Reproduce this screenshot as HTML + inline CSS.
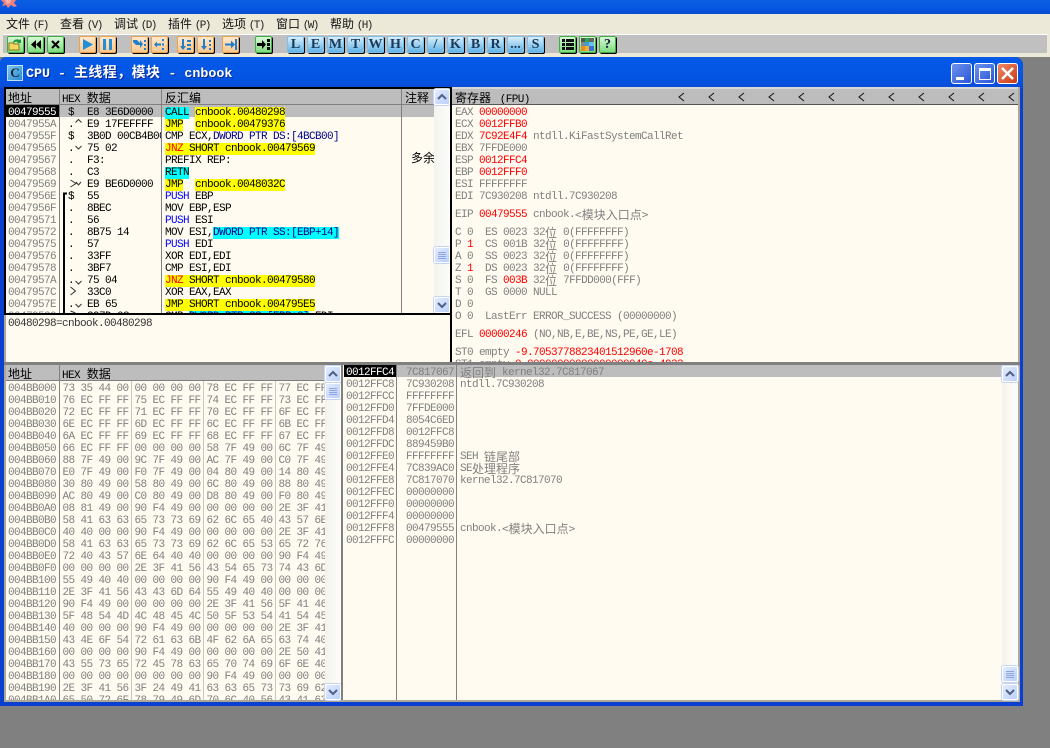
<!DOCTYPE html>
<html><head><meta charset="utf-8"><style>
*{box-sizing:border-box}
html,body{margin:0;padding:0;width:1050px;height:748px;overflow:hidden;background:#808080}
.a{position:absolute;overflow:hidden}
pre{margin:2px 0 0;position:absolute;font:11px/12px "Liberation Mono",monospace;letter-spacing:-.6px;white-space:pre;color:#808080}
.k{font:12px/12px "Noto Sans CJK SC",sans-serif;letter-spacing:0;vertical-align:top}
.r{color:#f00}.b{color:#000}.u{color:#00f}.n{color:#00008c}
.y{background:#ff0}.c{background:#0ff}
.h{position:absolute;background:#bdbdbd;color:#000;font:12px/18px "Noto Sans CJK SC",sans-serif;white-space:pre;overflow:hidden;border-bottom:1px solid #808080}
.h i{font:11px/18px "Liberation Mono",monospace;letter-spacing:-.6px;font-style:normal;margin-right:4px}
.m{position:absolute;top:16px;font:12px/16px "Noto Sans CJK SC",sans-serif;color:#111;white-space:pre}
.m i{font:11px/16px "Liberation Mono",monospace;font-style:normal;color:#222;letter-spacing:-1.6px}
.t{position:absolute;top:36px;width:17px;height:17px;border-radius:2px;box-shadow:1px 1px 0 #000;text-align:center;font:bold 14px/16px "Liberation Serif",serif;color:#17395c;overflow:hidden}
.t svg{position:absolute;left:0;top:0}
.o{background:linear-gradient(#ffe8cf,#fcc98f);border:1px solid #f0a24a}
.g{background:linear-gradient(#d8f8d8,#7fdc7f);border:1px solid #3fb03f}
.l{background:linear-gradient(#d9effb,#62b3e6);border:1px solid #7cbfe8}
.sb{position:absolute;width:16px;height:16px;background:linear-gradient(135deg,#e3ebfe,#bcd0f9);border:1px solid #fff;border-radius:2px;box-shadow:0 0 0 1px #c5d4f5}
.sb svg{position:absolute;left:0;top:0}
.track{position:absolute;background:linear-gradient(90deg,#f3f3ee,#fdfdfb)}
.wb{position:absolute;top:63px;width:21px;height:21px;border:1px solid #fff;border-radius:3px}
</style></head><body>

<!-- main app title -->
<div class="a" style="left:0;top:0;width:1050px;height:14px;background:linear-gradient(#0b5ee0,#0756e2 60%,#0a4cd0)"></div>
<svg class="a" style="left:0;top:0" width="18" height="12"><path d="M1 0h15l-2 3 3 3-3 1-3-2-3 3-2-3-4 1 2-3z" fill="#ee8080"/><path d="M5 0h6l-1 3-3 1z" fill="#f8b0a8"/></svg>

<!-- menu -->
<div class="a" style="left:0;top:14px;width:1050px;height:43px;background:#ece9d8"></div>
<div class="m" style="left:6px">文件 <i>(F)</i></div>
<div class="m" style="left:60px">查看 <i>(V)</i></div>
<div class="m" style="left:114px">调试 <i>(D)</i></div>
<div class="m" style="left:168px">插件 <i>(P)</i></div>
<div class="m" style="left:222px">选项 <i>(T)</i></div>
<div class="m" style="left:276px">窗口 <i>(W)</i></div>
<div class="m" style="left:330px">帮助 <i>(H)</i></div>

<!-- toolbar -->
<div class="a" style="left:3px;top:34px;width:1044px;height:19px;background:#c0c0c0;border-top:1px solid #fff"></div>
<div class="t g" style="left:7px"><svg width="15" height="15"><path d="M1 6h4l1 1h5v6H1z" fill="#f5d860" stroke="#8a7a20"/><path d="M5 5q2-4 7-2l1-1v4h-4l1-1q-3-1-4 1z" fill="#1f9a3a"/></svg></div>
<div class="t g" style="left:27px"><svg width="15" height="15"><path d="M8 3v9L3 7.500zM13 3v9L8 7.500z" fill="#000"/></svg></div>
<div class="t g" style="left:47px"><svg width="15" height="15"><path d="M4 4l7 7M11 4l-7 7" stroke="#000" stroke-width="2"/></svg></div>
<div class="t o" style="left:79px"><svg width="15" height="15"><path d="M3 2l10 5.500-10 5.500z" fill="#1f8fd8"/></svg></div>
<div class="t o" style="left:99px"><svg width="15" height="15"><path d="M3 2h3v11H3zM9 2h3v11H9z" fill="#1f8fd8"/></svg></div>
<div class="t o" style="left:131px"><svg width="15" height="15"><path d="M1 3h4l3 3V3l3 4-3 4V8H4L1 5z" fill="#1f7fc8"/><path d="M12 3h2v2h-2zM12 7h2v2h-2zM12 11h2v2h-2z" fill="#1f7fc8"/></svg></div>
<div class="t o" style="left:151px"><svg width="15" height="15"><path d="M2 7.500l3-3v2h4v2H5v2z" fill="#1f7fc8"/><path d="M10 2h2v2h-2zM10 6.500h2v2h-2zM10 11h2v2h-2z" fill="#1f7fc8"/></svg></div>
<div class="t o" style="left:177px"><svg width="15" height="15"><path d="M4 2h2v7h2l-3 4-3-4h2z" fill="#1f7fc8"/><path d="M9 3h4v2H9zM9 7h4v2H9zM9 11h4v2H9z" fill="#1f7fc8"/></svg></div>
<div class="t o" style="left:197px"><svg width="15" height="15"><path d="M5 2h2v7h2l-3 4-3-4h2z" fill="#1f7fc8"/><path d="M11 3h2v2h-2zM11 7h2v2h-2zM11 11h2v2h-2z" fill="#1f7fc8"/></svg></div>
<div class="t o" style="left:222px"><svg width="15" height="15"><path d="M2 6.500h6v-3l4 4-4 4v-3H2z" fill="#1f7fc8"/><path d="M12 2h2v11h-2z" fill="#1f7fc8"/></svg></div>
<div class="t g" style="left:255px"><svg width="15" height="15"><path d="M1 6h5V3l4 4.500L6 12V9H1z" fill="#000"/><path d="M11 2h3v3h-3zM11 6h3v3h-3zM11 10h3v3h-3z" fill="#000"/></svg></div>
<div class="t l" style="left:287px">L</div>
<div class="t l" style="left:307px">E</div>
<div class="t l" style="left:327px">M</div>
<div class="t l" style="left:347px">T</div>
<div class="t l" style="left:367px">W</div>
<div class="t l" style="left:387px">H</div>
<div class="t l" style="left:407px">C</div>
<div class="t l" style="left:427px">/</div>
<div class="t l" style="left:447px">K</div>
<div class="t l" style="left:467px">B</div>
<div class="t l" style="left:487px">R</div>
<div class="t l" style="left:507px">...</div>
<div class="t l" style="left:527px">S</div>
<div class="t g" style="left:559px"><svg width="15" height="15"><path d="M2 2h3v3H2zM6 2h8v3H6zM2 6h3v3H2zM6 6h8v3H6zM2 10h3v3H2zM6 10h8v3H6z" fill="#111"/></svg></div>
<div class="t g" style="left:579px"><svg width="15" height="15"><path d="M1 1h4v4H1z" fill="#555"/><path d="M5 1h4v4H5z" fill="#2aa84a"/><path d="M9 1h5v4H9z" fill="#666"/><path d="M1 5h4v4H1z" fill="#888"/><path d="M5 5h4v4H5z" fill="#39a0e0"/><path d="M9 5h5v4H9z" fill="#6bc0ee"/><path d="M1 9h4v5H1z" fill="#e88a20"/><path d="M5 9h4v5H5z" fill="#f2b030"/><path d="M9 9h5v5H9z" fill="#3f6fd0"/></svg></div>
<div class="t g" style="left:599px;color:#123">?</div>

<!-- CPU window frame -->
<div class="a" style="left:0;top:57px;width:1023px;height:649px;background:#0a3fd0;border-radius:6px 8px 0 0"></div>
<div class="a" style="left:0;top:57px;width:1023px;height:31px;background:linear-gradient(#0a5ae4,#0358e6 15%,#0454e4 70%,#0a4bd6);border-radius:6px 8px 0 0"></div>
<div class="a" style="left:7px;top:65px;width:16px;height:16px;background:linear-gradient(135deg,#7cc4f0,#2a8ad0);border:1px solid #bfe0f5;color:#123;font:bold 13px/14px 'Liberation Serif',serif;text-align:center">C</div>
<div class="a" style="left:26px;top:63px;width:300px;height:18px;color:#fff;font:bold 13.33px/18px 'Liberation Mono',monospace;white-space:pre;text-shadow:1px 1px 0 #0a2a90">CPU - <span style="font:bold 14px/18px 'Noto Sans CJK SC',sans-serif;letter-spacing:.4px">主线程，模块</span> - cnbook</div>
<div class="wb" style="left:951px;background:linear-gradient(135deg,#6d93ee,#2a55d8)"><div class="a" style="left:4px;top:13px;width:8px;height:3px;background:#fff"></div></div>
<div class="wb" style="left:974px;background:linear-gradient(135deg,#6d93ee,#2a55d8)"><div class="a" style="left:4px;top:4px;width:12px;height:12px;border:1px solid #fff;border-top-width:3px"></div></div>
<div class="wb" style="left:997px;background:linear-gradient(135deg,#ef8a66,#c93a14)"><svg class="a" style="left:0;top:0" width="19" height="19"><path d="M4 4l11 11M15 4L4 15" stroke="#fff" stroke-width="2.500"/></svg></div>

<!-- client area -->
<div class="a" style="left:4px;top:87px;width:1016px;height:615px;background:#aca899"></div>
<div class="a" style="left:6px;top:88px;width:1012px;height:612px;background:#fffbf0"></div>

<!-- disasm pane -->
<div class="a" style="left:4px;top:87px;width:448px;height:2px;background:#000"></div>
<div class="a" style="left:4px;top:87px;width:2px;height:228px;background:#000"></div>
<div class="a" style="left:6px;top:89px;width:428px;height:224px;overflow:hidden">
  <div class="h" style="left:0;top:0;width:428px;height:16px"></div>
  <div class="h" style="left:2px;top:0;width:50px;height:16px;background:none;border:0">地址</div>
  <div class="h" style="left:56px;top:0;width:90px;height:16px;background:none;border:0"><i>HEX</i> 数据</div>
  <div class="h" style="left:159px;top:0;width:90px;height:16px;background:none;border:0">反汇编</div>
  <div class="h" style="left:399px;top:0;width:30px;height:16px;background:none;border:0">注释</div>
  <div class="a" style="left:54px;top:16px;width:374px;height:12px;background:#bdbdbd"></div>
  <div class="a" style="left:0;top:16px;width:54px;height:12px;background:#000"></div>
  <pre style="left:2px;top:16px"><span style="color:#fff">00479555</span>
0047955A
0047955F
00479565
00479567
00479568
00479569
0047956E
0047956F
00479571
00479572
00479575
00479576
00479578
0047957A
0047957C
0047957E
00479580</pre>
  <pre class="b" style="left:62px;top:16px;color:#000">$
.
$
.
.
.

$
.
.
.
.
.
.
.

.
</pre>
  <div class="a" style="left:81px;top:16px;width:74px;height:216px"><pre style="left:0;top:0;color:#000">E8 3E6D0000
E9 17FEFFFF
3B0D 00CB4B00
75 02
F3:
C3
E9 BE6D0000
55
8BEC
56
8B75 14
57
33FF
3BF7
75 04
33C0
EB 65
397D 08</pre></div>
  <pre style="left:159px;top:16px;color:#000"><span class="c">CALL</span> <span class="y">cnbook.00480298</span>
<span class="y">JMP</span>  <span class="y">cnbook.00479376</span>
CMP ECX,<span class="n">DWORD PTR DS:[4BCB00]</span>
<span class="y"><span class="r">JNZ</span> SHORT cnbook.00479569</span>
PREFIX REP:
<span class="c">RETN</span>
<span class="y">JMP</span>  <span class="y">cnbook.0048032C</span>
<span class="u">PUSH</span> EBP
MOV EBP,ESP
<span class="u">PUSH</span> ESI
MOV ESI,<span class="c n">DWORD PTR SS:[EBP+14]</span>
<span class="u">PUSH</span> EDI
XOR EDI,EDI
CMP ESI,EDI
<span class="y"><span class="r">JNZ</span> SHORT cnbook.00479580</span>
XOR EAX,EAX
<span class="y">JMP SHORT cnbook.004795E5</span>
CMP <span class="c n">DWORD PTR SS:[EBP+8]</span>,EDI</pre>
  <div class="a" style="left:405px;top:62px;width:23px;height:14px;color:#000;font:12px/14px 'Noto Sans CJK SC',sans-serif;white-space:pre;overflow:hidden">多余</div>
  <div class="a" style="left:53px;top:0;width:1px;height:224px;background:#808080"></div>
  <div class="a" style="left:155px;top:0;width:1px;height:224px;background:#808080"></div>
  <div class="a" style="left:395px;top:0;width:1px;height:224px;background:#808080"></div>
  <svg class="a" style="left:0;top:0" width="428" height="224" fill="none" stroke="#333" stroke-width="1">
    <path d="M69.500 33.500l3-3 3 3"/>
    <path d="M69.500 57l3 3 3-3"/>
    <path d="M64.500 91l5.500 3.500-5.500 3.500M70 93l2.500 3 2.500-3"/>
    <path d="M69.500 192l3 3 3-3"/>
    <path d="M64.500 198l5 4-5 4"/>
    <path d="M69.500 215l3 3 3-3"/>
    <path d="M64.500 222l5 2"/>
    <path d="M58 224V104.500h3" stroke="#000" stroke-width="2"/>
  </svg>
</div>
<div class="track" style="left:434px;top:89px;width:17px;height:224px"></div>
<div class="sb" style="left:434px;top:89px"><svg width="14" height="14" fill="none" stroke="#4d6185" stroke-width="2"><path d="M3 9l4-4 4 4"/></svg></div>
<div class="sb" style="left:434px;top:247px"><svg width="14" height="14" stroke="#8aa5e0"><path d="M3 4.500h8M3 6.500h8M3 8.500h8M3 10.500h8"/></svg></div>
<div class="sb" style="left:434px;top:297px"><svg width="14" height="14" fill="none" stroke="#4d6185" stroke-width="2"><path d="M3 5l4 4 4-4"/></svg></div>
<div class="a" style="left:450px;top:87px;width:2px;height:277px;background:#000"></div>

<!-- info pane -->
<div class="a" style="left:4px;top:313px;width:448px;height:2px;background:#000"></div>
<pre style="left:8px;top:316px;color:#333">00480298=cnbook.00480298</pre>
<div class="a" style="left:4px;top:315px;width:2px;height:48px;background:#aca899"></div>

<!-- register pane -->
<div class="a" style="left:452px;top:87px;width:566px;height:2px;background:#d8d8d8"></div>
<div class="h" style="left:452px;top:89px;width:566px;height:16px;padding-left:3px;border-bottom:1px solid #555">寄存器 <i> (FPU)</i></div>
<svg class="a" style="left:452px;top:89px" width="566" height="16" fill="none" stroke="#111"><path d="M232 4l-5 4 5 4M262 4l-5 4 5 4M292 4l-5 4 5 4M322 4l-5 4 5 4M352 4l-5 4 5 4M382 4l-5 4 5 4M412 4l-5 4 5 4M442 4l-5 4 5 4M472 4l-5 4 5 4M502 4l-5 4 5 4M532 4l-5 4 5 4M562 4l-5 4 5 4"/></svg>
<div class="a" style="left:452px;top:105px;width:566px;height:257px">
<pre style="left:3px;top:0">EAX <span class="r">00000000</span>
ECX <span class="r">0012FFB0</span>
EDX <span class="r">7C92E4F4</span> ntdll.KiFastSystemCallRet
EBX 7FFDE000
ESP <span class="r">0012FFC4</span>
EBP <span class="r">0012FFF0</span>
ESI FFFFFFFF
EDI 7C930208 ntdll.7C930208</pre>
<pre style="left:3px;top:102px">EIP <span class="r">00479555</span> cnbook.<span class="k">&lt;模块入口点&gt;</span></pre>
<pre style="left:3px;top:120px">C 0  ES 0023 32<span class="k">位</span> 0(FFFFFFFF)
P <span class="r">1</span>  CS 001B 32<span class="k">位</span> 0(FFFFFFFF)
A 0  SS 0023 32<span class="k">位</span> 0(FFFFFFFF)
Z <span class="r">1</span>  DS 0023 32<span class="k">位</span> 0(FFFFFFFF)
S 0  FS <span class="r">003B</span> 32<span class="k">位</span> 7FFDD000(FFF)
T 0  GS 0000 NULL
D 0
O 0  LastErr ERROR_SUCCESS (00000000)</pre>
<pre style="left:3px;top:222px">EFL <span class="r">00000246</span> (NO,NB,E,BE,NS,PE,GE,LE)</pre>
<pre style="left:3px;top:240px">ST0 empty <span class="r">-9.7053778823401512960e-1708</span>
ST1 empty <span class="r">0.00000000000000000040e-4933</span></pre>
</div>

<!-- splitter -->
<div class="a" style="left:4px;top:362px;width:1016px;height:3px;background:#808080"></div>

<!-- dump pane -->
<div class="a" style="left:6px;top:365px;width:319px;height:335px;overflow:hidden">
  <div class="h" style="left:0;top:0;width:319px;height:16px"></div>
  <div class="h" style="left:2px;top:0;width:50px;height:16px;background:none;border:0">地址</div>
  <div class="h" style="left:56px;top:0;width:90px;height:16px;background:none;border:0"><i>HEX</i> 数据</div>
  <pre style="left:2px;top:16px">004BB000
004BB010
004BB020
004BB030
004BB040
004BB050
004BB060
004BB070
004BB080
004BB090
004BB0A0
004BB0B0
004BB0C0
004BB0D0
004BB0E0
004BB0F0
004BB100
004BB110
004BB120
004BB130
004BB140
004BB150
004BB160
004BB170
004BB180
004BB190
004BB1A0</pre>
  <pre style="left:56.500px;top:16px">73 35 44 00 00 00 00 00 78 EC FF FF 77 EC FF FF
76 EC FF FF 75 EC FF FF 74 EC FF FF 73 EC FF FF
72 EC FF FF 71 EC FF FF 70 EC FF FF 6F EC FF FF
6E EC FF FF 6D EC FF FF 6C EC FF FF 6B EC FF FF
6A EC FF FF 69 EC FF FF 68 EC FF FF 67 EC FF FF
66 EC FF FF 00 00 00 00 58 7F 49 00 6C 7F 49 00
88 7F 49 00 9C 7F 49 00 AC 7F 49 00 C0 7F 49 00
E0 7F 49 00 F0 7F 49 00 04 80 49 00 14 80 49 00
30 80 49 00 58 80 49 00 6C 80 49 00 88 80 49 00
AC 80 49 00 C0 80 49 00 D8 80 49 00 F0 80 49 00
08 81 49 00 90 F4 49 00 00 00 00 00 2E 3F 41 56
58 41 63 63 65 73 73 69 62 6C 65 40 43 57 6E 64
40 40 00 00 90 F4 49 00 00 00 00 00 2E 3F 41 56
58 41 63 63 65 73 73 69 62 6C 65 53 65 72 76 65
72 40 43 57 6E 64 40 40 00 00 00 00 90 F4 49 00
00 00 00 00 2E 3F 41 56 43 54 65 73 74 43 6D 64
55 49 40 40 00 00 00 00 90 F4 49 00 00 00 00 00
2E 3F 41 56 43 43 6D 64 55 49 40 40 00 00 00 00
90 F4 49 00 00 00 00 00 2E 3F 41 56 5F 41 46 58
5F 48 54 4D 4C 48 45 4C 50 5F 53 54 41 54 45 40
40 00 00 00 90 F4 49 00 00 00 00 00 2E 3F 41 56
43 4E 6F 54 72 61 63 6B 4F 62 6A 65 63 74 40 40
00 00 00 00 90 F4 49 00 00 00 00 00 2E 50 41 56
43 55 73 65 72 45 78 63 65 70 74 69 6F 6E 40 40
00 00 00 00 00 00 00 00 90 F4 49 00 00 00 00 00
2E 3F 41 56 3F 24 49 41 63 63 65 73 73 69 62 6C
65 50 72 6F 78 79 49 6D 70 6C 40 56 43 41 63 63</pre>
  <div class="a" style="left:53px;top:0;width:1px;height:335px;background:#808080"></div>
  <div class="a" style="left:125px;top:16px;width:1px;height:319px;background:#c8c8c0"></div>
  <div class="a" style="left:197px;top:16px;width:1px;height:319px;background:#c8c8c0"></div>
  <div class="a" style="left:269px;top:16px;width:1px;height:319px;background:#c8c8c0"></div>
</div>
<div class="track" style="left:325px;top:365px;width:16px;height:335px"></div>
<div class="sb" style="left:325px;top:366px"><svg width="14" height="14" fill="none" stroke="#4d6185" stroke-width="2"><path d="M3 9l4-4 4 4"/></svg></div>
<div class="sb" style="left:325px;top:383px"><svg width="14" height="14" stroke="#8aa5e0"><path d="M3 4.500h8M3 6.500h8M3 8.500h8M3 10.500h8"/></svg></div>
<div class="sb" style="left:325px;top:684px"><svg width="14" height="14" fill="none" stroke="#4d6185" stroke-width="2"><path d="M3 5l4 4 4-4"/></svg></div>
<div class="a" style="left:341px;top:365px;width:2px;height:335px;background:#808080"></div>

<!-- stack pane -->
<div class="a" style="left:343px;top:365px;width:659px;height:335px;overflow:hidden">
  <div class="a" style="left:53px;top:0;width:606px;height:12px;background:#bdbdbd"></div>
  <div class="a" style="left:1px;top:0;width:52px;height:12px;background:#000"></div>
  <pre style="left:3px;top:0"><span style="color:#fff">0012FFC4</span>
0012FFC8
0012FFCC
0012FFD0
0012FFD4
0012FFD8
0012FFDC
0012FFE0
0012FFE4
0012FFE8
0012FFEC
0012FFF0
0012FFF4
0012FFF8
0012FFFC</pre>
  <pre style="left:63px;top:0">7C817067
7C930208
FFFFFFFF
7FFDE000
8054C6ED
0012FFC8
889459B0
FFFFFFFF
7C839AC0
7C817070
00000000
00000000
00000000
00479555
00000000</pre>
  <pre style="left:117px;top:0"><span class="k">返回到</span> kernel32.7C817067
ntdll.7C930208





SEH <span class="k">链尾部</span>
SE<span class="k">处理程序</span>
kernel32.7C817070



cnbook.<span class="k">&lt;模块入口点&gt;</span></pre>
  <div class="a" style="left:53px;top:0;width:1px;height:335px;background:#808080"></div>
  <div class="a" style="left:113px;top:0;width:1px;height:335px;background:#808080"></div>
</div>
<div class="track" style="left:1002px;top:365px;width:16px;height:335px"></div>
<div class="sb" style="left:1002px;top:366px"><svg width="14" height="14" fill="none" stroke="#4d6185" stroke-width="2"><path d="M3 9l4-4 4 4"/></svg></div>
<div class="sb" style="left:1002px;top:666px"><svg width="14" height="14" stroke="#8aa5e0"><path d="M3 4.500h8M3 6.500h8M3 8.500h8M3 10.500h8"/></svg></div>
<div class="sb" style="left:1002px;top:684px"><svg width="14" height="14" fill="none" stroke="#4d6185" stroke-width="2"><path d="M3 5l4 4 4-4"/></svg></div>

</body></html>
